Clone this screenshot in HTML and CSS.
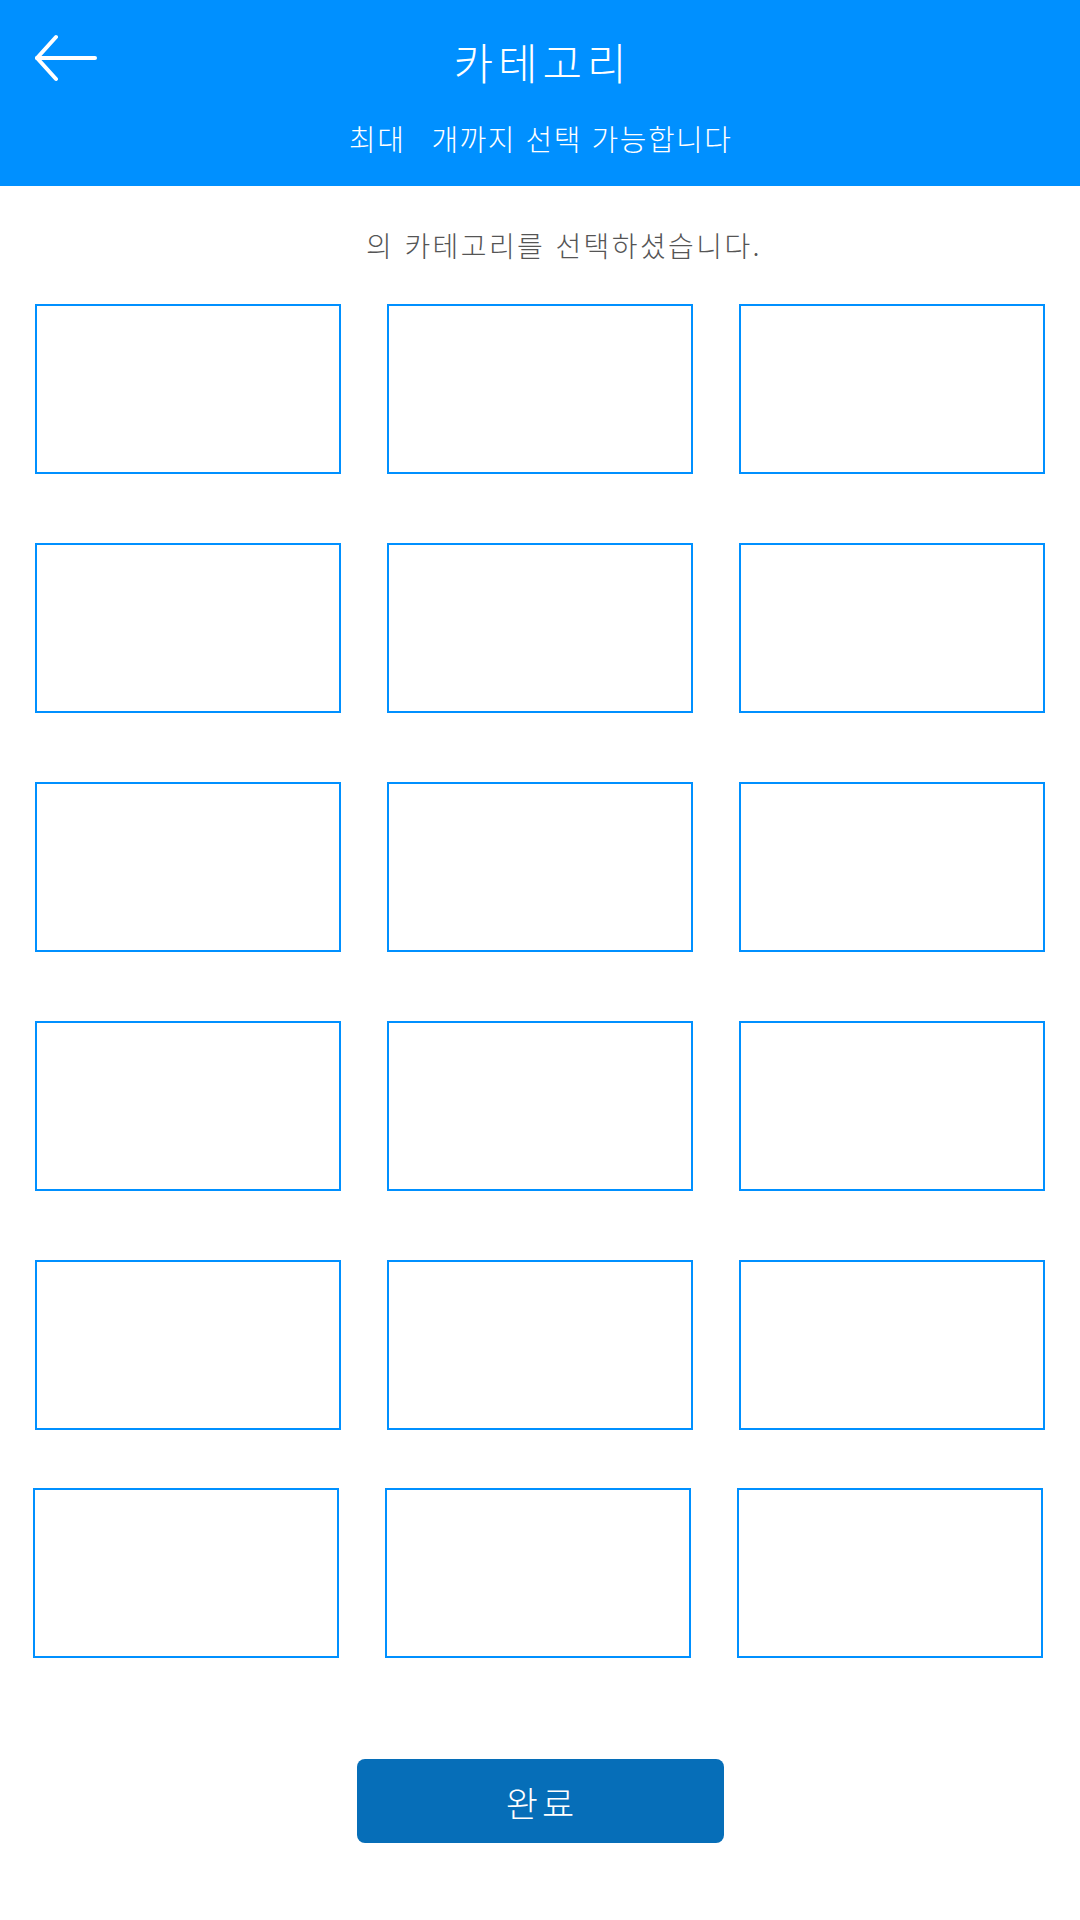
FILE: index.html
```html
<!DOCTYPE html>
<html lang="ko">
<head>
<meta charset="utf-8">
<title>카테고리</title>
<link rel="stylesheet" href="styles.css">
</head>
<body>
<header class="appbar">
  <div class="appbar-top">
    <button class="back" aria-label="뒤로">
      <svg width="70" height="50" viewBox="0 0 70 50" fill="none" stroke="#fff" stroke-width="4" stroke-linecap="round" stroke-linejoin="round">
        <path d="M2 25 H60"/>
        <path d="M21 4 L2 25 L21 46"/>
      </svg>
    </button>
    <h1 class="title">카테고리</h1>
    <span class="spacer"></span>
  </div>
  <p class="subtitle">최대<span class="max-count"></span>개까지 선택 가능합니다</p>
</header>
<main class="content">
  <p class="selected"><span class="selected-count"></span>의 카테고리를 선택하셨습니다.</p>
  <div class="grid">
    <div class="cell"></div><div class="cell"></div><div class="cell"></div>
    <div class="cell"></div><div class="cell"></div><div class="cell"></div>
    <div class="cell"></div><div class="cell"></div><div class="cell"></div>
    <div class="cell"></div><div class="cell"></div><div class="cell"></div>
    <div class="cell"></div><div class="cell"></div><div class="cell"></div>
  </div>
  <div class="grid grid-last">
    <div class="cell"></div><div class="cell"></div><div class="cell"></div>
  </div>
  <div class="actions">
    <button class="done">완료</button>
  </div>
</main>
</body>
</html>
```
FILE: styles.css
```css
html, body {
  margin: 0;
  padding: 0;
  background: #ffffff;
}
body {
  width: 1080px;
  font-family: "Noto Sans CJK KR", "Noto Sans", sans-serif;
  font-weight: 300;
}
.appbar {
  height: 186px;
  box-sizing: border-box;
  background: #0090ff;
  color: #ffffff;
  padding-top: 40px;
}
.appbar-top {
  display: grid;
  grid-template-columns: 1fr auto 1fr;
  grid-template-rows: 43px;
  align-items: start;
  height: 43px;
}
.back {
  justify-self: start;
  margin: -7px 0 0 35px;
  padding: 0;
  border: 0;
  background: none;
  width: 70px;
  height: 50px;
  display: flex;
}
.title {
  margin: 0;
  padding-left: 5px;
  font-size: 43px;
  line-height: 43px;
  font-weight: 300;
  letter-spacing: 5px;
}
.subtitle {
  margin: 41px 0 0;
  text-align: center;
  font-size: 29px;
  line-height: 29px;
  letter-spacing: 1.5px;
  padding-left: 1.5px;
}
.max-count {
  display: inline-block;
  width: 26px;
}
.content {
  display: flex;
  flex-direction: column;
}
.selected {
  margin: 45px 0 0;
  text-align: center;
  font-size: 28px;
  line-height: 28px;
  letter-spacing: 2.4px;
  color: #555555;
}
.selected-count {
  display: inline-block;
  width: 48px;
}
.grid {
  display: grid;
  grid-template-columns: repeat(3, 306px);
  column-gap: 46px;
  row-gap: 69px;
  padding-left: 35px;
  margin-top: 45px;
}
.grid-last {
  padding-left: 33px;
  margin-top: 58px;
}
.cell {
  height: 170px;
  box-sizing: border-box;
  border: 2px solid #0090ff;
}
.actions {
  display: flex;
  justify-content: center;
  margin-top: 101px;
}
.done {
  width: 367px;
  height: 84px;
  border: 0;
  border-radius: 8px;
  background: #066eb8;
  color: #ffffff;
  font-family: "Noto Sans CJK KR", "Noto Sans", sans-serif;
  font-weight: 300;
  font-size: 35px;
  letter-spacing: 4px;
  padding: 0 0 0 4px;
}
```
